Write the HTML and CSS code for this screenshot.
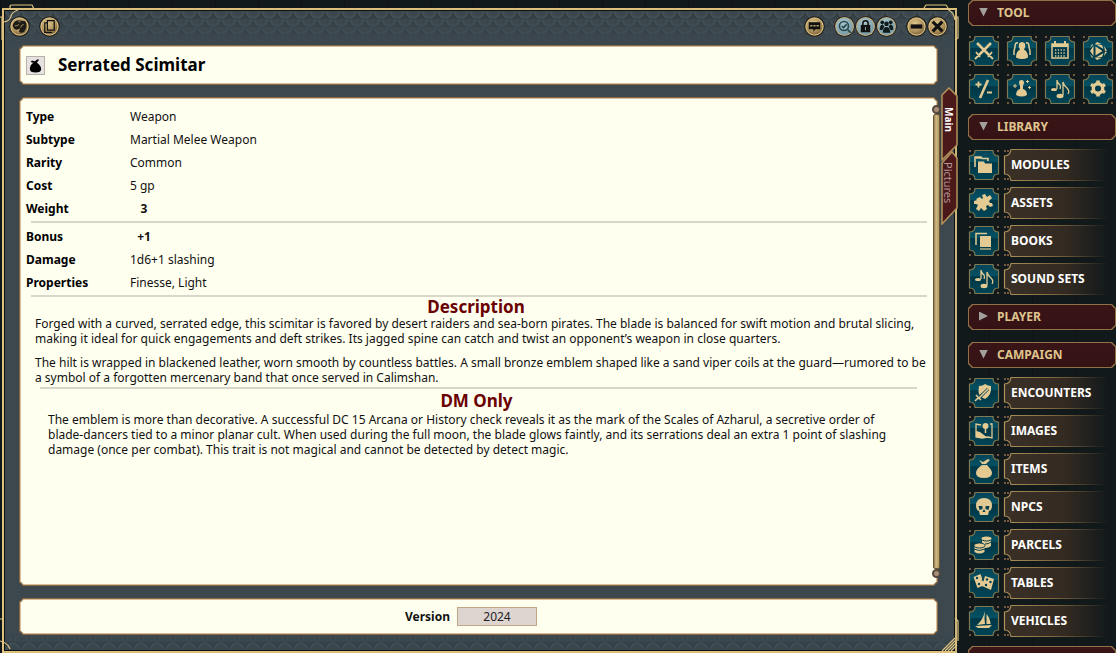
FILE: index.html
```html
<!DOCTYPE html>
<html lang="en">
<head>
  <meta charset="UTF-8" />
  <meta name="viewport" content="width=device-width, initial-scale=1.0" />
  <title>Serrated Scimitar</title>
  <link rel="stylesheet" href="styles.css">
</head>
<body>
  <!-- shared shapes -->
  <svg class="defs" aria-hidden="true">
    <defs>
      <linearGradient id="teal" x1="0" y1="0" x2="0" y2="1">
        <stop offset="0" stop-color="#064458" />
        <stop offset=".38" stop-color="#045062" />
        <stop offset=".42" stop-color="#003746" />
        <stop offset="1" stop-color="#004556" />
      </linearGradient>
      <linearGradient id="wood" x1="0" y1="0" x2="1" y2="0">
        <stop offset="0" stop-color="#3a3026" />
        <stop offset=".55" stop-color="#332a22" />
        <stop offset=".95" stop-color="#332a22" stop-opacity="0" />
      </linearGradient>
      <linearGradient id="edge" gradientUnits="userSpaceOnUse" x1="0" y1="0" x2="104" y2="0">
        <stop offset="0" stop-color="#b0935a" />
        <stop offset=".5" stop-color="#7c653e" />
        <stop offset="1" stop-color="#7c653e" stop-opacity="0" />
      </linearGradient>
      <radialGradient id="brass" cx=".4" cy=".3" r=".8">
        <stop offset="0" stop-color="#dcc48c" />
        <stop offset=".6" stop-color="#b0935c" />
        <stop offset="1" stop-color="#715a34" />
      </radialGradient>
      <radialGradient id="steel" cx=".4" cy=".3" r=".8">
        <stop offset="0" stop-color="#a9c6cc" />
        <stop offset="1" stop-color="#7197a2" />
      </radialGradient>
    </defs>
    <symbol id="tile" viewBox="0 0 32 32">
      <path d="M7 1.500H25Q25 7 30.500 7V25Q25 25 25 30.500H7Q7 25 1.500 25V7Q7 7 7 1.500Z" fill="url(#teal)" stroke="#7f7a52" stroke-width="1.200" />
      <path d="M1 1h2v2h-2zM29 1h2v2h-2zM1 29h2v2h-2zM29 29h2v2h-2z" fill="#765842" />
    </symbol>
    <symbol id="plate" viewBox="0 0 112 32">
      <path d="M8 .5H112V31.500H8Q7 25 1 25V7Q7 7 8 .5Z" fill="url(#wood)" />
      <path d="M104 .5H8Q7 7 1.500 7V25Q7 25 8 31.500H104" fill="none" stroke="url(#edge)" stroke-width="1.200" />
      <path d="M1 1h2v2h-2zM4 1h2v2h-2zM1 29h2v2h-2zM4 29h2v2h-2z" fill="#765842" />
    </symbol>
    <symbol id="coin" viewBox="0 0 20 20">
      <circle cx="10" cy="10" r="9.800" fill="#1c1a16" />
      <circle cx="10" cy="10" r="8.800" fill="#d6bc80" />
      <circle cx="10" cy="10" r="7.600" fill="url(#brass)" />
    </symbol>
    <symbol id="coin-blue" viewBox="0 0 20 20">
      <circle cx="10" cy="10" r="9.800" fill="#1c1a16" />
      <circle cx="10" cy="10" r="9" fill="#c6b181" />
      <circle cx="10" cy="10" r="8" fill="url(#steel)" />
    </symbol>
    <symbol id="notes" viewBox="0 0 32 32">
      <path d="M13 7v9M13 7q0 3 3 5q1 2 0 4M19 9v13M19 9q1 4 4 6q3 3 1 6" fill="none" stroke="#e2ca92" stroke-width="1.300" />
      <ellipse cx="10" cy="16.500" rx="3" ry="1.600" fill="#e2ca92" />
      <ellipse cx="16" cy="23" rx="3.500" ry="2.200" fill="#e2ca92" />
    </symbol>
    <symbol id="bag" viewBox="0 0 32 32">
      <path d="M11 9l4 1 4-3 2 1-3 4q6 4 6 9 0 5-8 5t-8-5q0-6 5-9l-4-1z" />
    </symbol>
  </svg>

  <div class="app">
    <main class="window">
      <svg class="corner corner-tl" aria-hidden="true" viewBox="0 0 40 40">
        <path d="M10 5V3Q10 1 12 1H32L34 5M0 13H2V36M4 18Q10 17 11 12Q12 8 18 6" />
      </svg>
      <svg class="corner corner-tr" aria-hidden="true" viewBox="0 0 40 40">
        <path d="M4 4L6 1H26L28 4M27 5Q34 8 35 16M35 13H38V34L35 36" />
      </svg>
      <svg class="corner corner-bl" aria-hidden="true" viewBox="0 0 40 40">
        <path d="M0 6H3M0 28Q8 30 10 36" />
      </svg>
      <svg class="corner corner-br" aria-hidden="true" viewBox="0 0 40 40">
        <path d="M35 5L38 8V28M22 38L35 25M25 38L36 27M28 38L37 29M31 38L37 32" />
      </svg>

      <header class="toolbar">
        <button class="round" aria-label="Token">
          <svg viewBox="0 0 20 20"><use href="#coin" /><path d="M3.500 9q1-5 6-5l6 1q2 3 1 6l-2 4q-3 2-5 0l1-3-3 1q-3 0-4-4z" fill="#1c1b16" /><path d="M5.500 9q2 1 4-1M11 11q1-3 3-3M9 5l2 1" stroke="#8d7850" fill="none" /></svg>
        </button>
        <button class="round copy" aria-label="Copy">
          <svg viewBox="0 0 20 20"><use href="#coin" /><path d="M8 4.500h6.500v9H8zM8 6.500H5.500v9h7" fill="none" stroke="#111" stroke-width="1.200" /></svg>
        </button>
        <span class="spacer"></span>
        <button class="round" aria-label="Chat">
          <svg viewBox="0 0 20 20"><use href="#coin" /><path d="M4.500 6h11v6.500H11L9 15v-2.500H4.500z" fill="#111" /><path d="M6 8.500h2v1.500h-2zM9 8.500h2v1.500h-2zM12 8.500h2v1.500h-2z" fill="#c2a871" /></svg>
        </button>
        <div class="round-group share">
          <button class="round" aria-label="Identify">
            <svg viewBox="0 0 20 20"><use href="#coin-blue" /><circle cx="9.500" cy="9.500" r="4.300" fill="none" stroke="#29464e" stroke-width="1.500" /><path d="M13 13l3 3M7.500 9.500l1.500 1.500 3-3" fill="none" stroke="#29464e" stroke-width="1.600" /></svg>
          </button>
          <button class="round" aria-label="Lock">
            <svg viewBox="0 0 20 20"><use href="#coin-blue" /><path d="M7.500 9V7q0-2.500 2.500-2.500T12.500 7v2" fill="none" stroke="#111" stroke-width="1.500" /><path d="M5.500 8.500h9v7h-9z" fill="#111" /><path d="M9.500 10.500h1v3h-1z" fill="#82a5ad" /></svg>
          </button>
          <button class="round" aria-label="Share">
            <svg viewBox="0 0 20 20"><use href="#coin-blue" /><g fill="#101b1e"><circle cx="6" cy="6" r="1.800" /><circle cx="14" cy="6" r="1.800" /><circle cx="10" cy="7.500" r="2.200" /><path d="M3.500 13q0-5 3-5l1.500 2-2 3.500zM16.500 13q0-5-3-5l-1.500 2 2 3.500zM6.500 16q0-5.500 3.500-5.500t3.500 5.500z" /></g></svg>
          </button>
        </div>
        <div class="round-group">
          <button class="round" aria-label="Minimize">
            <svg viewBox="0 0 20 20"><use href="#coin" /><path d="M4.500 8h11v4h-11z" fill="#111" /></svg>
          </button>
          <button class="round" aria-label="Close">
            <svg viewBox="0 0 20 20"><use href="#coin" /><path d="M6.500 6.500l7 7M13.500 6.500l-7 7" stroke="#111" stroke-width="3" stroke-linecap="square" /></svg>
          </button>
        </div>
      </header>

      <section class="panel title">
        <button class="link-icon" aria-label="Item link"><svg viewBox="4 4 24 24"><use href="#bag" width="32" height="32" /></svg></button>
        <h1>Serrated Scimitar</h1>
      </section>

      <section class="panel sheet">
        <dl class="fields">
          <dt>Type</dt><dd>Weapon</dd>
          <dt>Subtype</dt><dd>Martial Melee Weapon</dd>
          <dt>Rarity</dt><dd>Common</dd>
          <dt>Cost</dt><dd>5 gp</dd>
          <dt>Weight</dt><dd class="number">3</dd>
        </dl>
        <hr>
        <dl class="fields">
          <dt>Bonus</dt><dd class="number">+1</dd>
          <dt>Damage</dt><dd>1d6+1 slashing</dd>
          <dt>Properties</dt><dd>Finesse, Light</dd>
        </dl>
        <hr>
        <div class="story">
          <h2>Description</h2>
          <p>Forged with a curved, serrated edge, this scimitar is favored by desert raiders and sea-born pirates. The blade is balanced for swift motion and brutal slicing, making it ideal for quick engagements and deft strikes. Its jagged spine can catch and twist an opponent’s weapon in close quarters.</p>
          <p>The hilt is wrapped in blackened leather, worn smooth by countless battles. A small bronze emblem shaped like a sand viper coils at the guard—rumored to be a symbol of a forgotten mercenary band that once served in Calimshan.</p>
          <hr>
          <div class="secret">
            <h2>DM Only</h2>
            <p>The emblem is more than decorative. A successful DC 15 Arcana or History check reveals it as the mark of the Scales of Azharul, a secretive order of blade-dancers tied to a minor planar cult. When used during the full moon, the blade glows faintly, and its serrations deal an extra 1 point of slashing damage (once per combat). This trait is not magical and cannot be detected by detect magic.</p>
          </div>
        </div>
        <div class="scroll" aria-hidden="true"><i></i><b></b><i></i></div>
      </section>

      <section class="panel footer">
        <label for="version">Version</label>
        <input id="version" type="text" value="2024">
      </section>

      <nav class="tabs">
        <button class="tab active">
          <svg viewBox="0 0 17 74" aria-hidden="true"><path d="M1 8L8 1L16 9V58L1 73Z" /></svg><span>Main</span>
        </button>
        <button class="tab">
          <svg viewBox="0 0 17 74" aria-hidden="true"><path d="M1 12L11 1L16 7V57L1 73Z" /></svg><span>Pictures</span>
        </button>
      </nav>
    </main>

    <aside class="sidebar">
      <button class="group"><i class="down"></i>TOOL</button>
      <div class="tools">
        <button class="icon" aria-label="Combat tracker"><svg viewBox="0 0 32 32"><use href="#tile" /><path d="M9 8L21 20M23 8L11 20" stroke="#e2ca92" stroke-width="2.600" /><path d="M8 17l4 5M24 17l-4 5M10.500 20.500L7 24M21.500 20.500L25 24" stroke="#e2ca92" stroke-width="1.800" /></svg></button>
        <button class="icon" aria-label="Party sheet"><svg viewBox="0 0 32 32"><use href="#tile" /><path d="M13 8.500q3-3 6 0 1 3-1 6 4 2 4 8-6 3-12 0 0-6 4-8-2-3-1-6z" fill="#e2ca92" /><path d="M12 8q-3-1-3 4l-1 4v4M20 8q3-1 3 4l1 4v4" fill="none" stroke="#e2ca92" stroke-width="1.500" /></svg></button>
        <button class="icon" aria-label="Calendar"><svg viewBox="0 0 32 32"><use href="#tile" /><path d="M8 9h16v14H8z" fill="none" stroke="#e2ca92" stroke-width="1.500" /><path d="M8 9h16v3H8z" fill="#e2ca92" /><path d="M11 6v4M21 6v4" stroke="#e2ca92" stroke-width="2" /><path d="M11 15h11M11 18h11M11 21h11" stroke="#e2ca92" stroke-width="1.300" stroke-dasharray="1.300 1.500" /></svg></button>
        <button class="icon" aria-label="Dice"><svg viewBox="0 0 32 32"><use href="#tile" /><g fill="#e2ca92"><path d="M13.500 11.500l7 4.500-7 4.500z" /><path d="M11.500 11v10L8 16zM15 7l-2.500 2.500 7-.5zM14 9.500l6 .5 1.500 4zM14 22.500l6-.5 1.500-4zM15 25l-2.500-2.500 7 .5zM22 11l3 4.500-2 .5zM22 21l3-4-2-.5zM8 13l2-4 1 1zM8 19l2 4 1-1z" /></g></svg></button>
        <button class="icon" aria-label="Modifiers"><svg viewBox="0 0 32 32"><use href="#tile" /><path d="M20 7L12 25" stroke="#e2ca92" stroke-width="2.600" /><path d="M7.500 11.500h6M10.500 8.500v6M19 19.500h5" stroke="#e2ca92" stroke-width="1.800" /></svg></button>
        <button class="icon" aria-label="Effects"><svg viewBox="0 0 32 32"><use href="#tile" /><path d="M13 10q0-3 2.500-3t2.500 3l-1 3v3q4 1 4 6-5 3-11 0 0-5 4-6v-3z" fill="#e2ca92" /><path d="M9 11v4M7 13h4M21.500 7v3M20 8.500h3M23.500 13v3M22 14.500h3" stroke="#e2ca92" /></svg></button>
        <button class="icon" aria-label="Sounds"><svg viewBox="0 0 32 32"><use href="#tile" /><use href="#notes" /></svg></button>
        <button class="icon" aria-label="Options"><svg viewBox="0 0 32 32"><use href="#tile" /><circle cx="16" cy="15.500" r="4.700" fill="none" stroke="#e2ca92" stroke-width="3.400" /><path d="M16 7.500v3M16 20.500v3M9 11.500l2.500 1.500M20.500 18l2.500 1.500M9 19.500l2.500-1.500M20.500 13l2.500-1.500" stroke="#e2ca92" stroke-width="3.600" /></svg></button>
      </div>

      <button class="group"><i class="down"></i>LIBRARY</button>
      <button class="entry"><svg class="icon" viewBox="0 0 32 32"><use href="#tile" /><path d="M7 18V8h6l1 1.500h6V12M8 9h5" fill="none" stroke="#e2ca92" stroke-width="1.600" /><path d="M10 12.500h6l1 2h7V24H10z" fill="#e2ca92" /></svg><span><svg viewBox="0 0 112 32"><use href="#plate" /></svg>MODULES</span></button>
      <button class="entry"><svg class="icon" viewBox="0 0 32 32"><use href="#tile" /><path d="M8 12l4-2 2 2 1-1-1-3 3-1 2 3 3-2 2 3-3 3 1 2 2 0 1 3-3 1-2-2-2 1 1 3-3 2-3-3-2 3-3-2 2-4-2-1-2 0 0-3 3-1z" fill="#e2ca92" /></svg><span><svg viewBox="0 0 112 32"><use href="#plate" /></svg>ASSETS</span></button>
      <button class="entry"><svg class="icon" viewBox="0 0 32 32"><use href="#tile" /><path d="M8 20V8.500h11" fill="none" stroke="#e2ca92" stroke-width="1.500" /><path d="M12 11h11v11H12z" fill="#e2ca92" /><path d="M12 24h11" stroke="#e2ca92" stroke-width="1.200" /></svg><span><svg viewBox="0 0 112 32"><use href="#plate" /></svg>BOOKS</span></button>
      <button class="entry"><svg class="icon" viewBox="0 0 32 32"><use href="#tile" /><use href="#notes" /></svg><span><svg viewBox="0 0 112 32"><use href="#plate" /></svg>SOUND SETS</span></button>

      <button class="group"><i class="right"></i>PLAYER</button>
      <button class="group"><i class="down"></i>CAMPAIGN</button>
      <button class="entry"><svg class="icon" viewBox="0 0 32 32"><use href="#tile" /><path d="M11 9q4 0 6-2 3 2 6 2 1 9-6 13l-4-2 6-7-8 5q-1-4 0-9z" fill="#e2ca92" /><path d="M20 12L10 22M8 18l5 5M10 21l-3 3" stroke="#063f50" stroke-width="3" /><path d="M20 12L10 22M8 18l5 5M10 21l-3 3" stroke="#e2ca92" stroke-width="1.600" /></svg><span><svg viewBox="0 0 112 32"><use href="#plate" /></svg>ENCOUNTERS</span></button>
      <button class="entry"><svg class="icon" viewBox="0 0 32 32"><use href="#tile" /><path d="M13 10L8 9v13l6 1 6-1 4 1V9h-2" fill="none" stroke="#e2ca92" stroke-width="1.300" /><path d="M8 16l4 1 4 3 4 3-6 0-6-1z" fill="#e2ca92" /><circle cx="17.500" cy="11" r="3" fill="#e2ca92" /><path d="M17.500 13v5" stroke="#e2ca92" stroke-width="1.500" /></svg><span><svg viewBox="0 0 112 32"><use href="#plate" /></svg>IMAGES</span></button>
      <button class="entry"><svg class="icon" viewBox="0 0 32 32"><use href="#tile" /><path d="M11 7l4 2 5-3 2 1-4 4h-4zM14 12h5q5 5 5 8 0 5-8 5t-8-5q0-4 6-8z" fill="#e2ca92" /></svg><span><svg viewBox="0 0 112 32"><use href="#plate" /></svg>ITEMS</span></button>
      <button class="entry"><svg class="icon" viewBox="0 0 32 32"><use href="#tile" /><path d="M8 15q0-8 8-8t8 8q0 4-3 5l-1 4h-8l-1-4q-3-1-3-5z" fill="#e2ca92" /><path d="M10.500 15h4v3l-3 1zM21.500 15h-4v3l3 1zM16 18l1.500 3h-3z" fill="#063f50" /></svg><span><svg viewBox="0 0 112 32"><use href="#plate" /></svg>NPCS</span></button>
      <button class="entry"><svg class="icon" viewBox="0 0 32 32"><use href="#tile" /><g fill="#e2ca92"><path d="M6.500 17v6q5 3 10 0v-6z" /><path d="M14 10v8l3 1q4 0 6-2v-7z" /></g><g fill="#e2ca92" stroke="#063f50"><ellipse cx="18.500" cy="9.500" rx="5.500" ry="2.500" /><ellipse cx="11.500" cy="16.500" rx="5.500" ry="2.500" /></g><path d="M6 20q5 3 11 0M17 15q4 0 6-2" fill="none" stroke="#063f50" /></svg><span><svg viewBox="0 0 112 32"><use href="#plate" /></svg>PARCELS</span></button>
      <button class="entry"><svg class="icon" viewBox="0 0 32 32"><use href="#tile" /><path d="M5.500 10l7-3 4 11-7 3zM17 9l9 3-3 11-9-4z" fill="#e2ca92" /><g fill="#063f50"><circle cx="9" cy="11" r="1.200" /><circle cx="11" cy="17" r="1.200" /><circle cx="19" cy="12.500" r="1.200" /><circle cx="22.500" cy="15" r="1.200" /><circle cx="18" cy="18" r="1.200" /></g><path d="M16 9l-2 5" stroke="#063f50" /></svg><span><svg viewBox="0 0 112 32"><use href="#plate" /></svg>TABLES</span></button>
      <button class="entry"><svg class="icon" viewBox="0 0 32 32"><use href="#tile" /><path d="M17 6q-1 7 0 13l-8 1q6-5 8-14zM18.500 9q4 5 4 10h-4zM7 21l17-1-3 3H10z" fill="#e2ca92" /></svg><span><svg viewBox="0 0 112 32"><use href="#plate" /></svg>VEHICLES</span></button>
      <button class="group" aria-label="Rules"></button>
    </aside>
  </div>
</body>
</html>
```

FILE: styles.css
```css
* {
  box-sizing: border-box;
}
body {
  margin: 0;
  height: 100vh;
  overflow: hidden;
  background: #12191b;
  font-family: "Noto Sans", sans-serif;
  font-size: 12px;
  color: #111;
}
button {
  padding: 0;
  border: none;
  background: none;
  font: inherit;
  color: inherit;
  cursor: pointer;
}
svg {
  display: block;
}
.defs {
  position: absolute;
  width: 0;
  height: 0;
}
.app {
  display: flex;
  height: 100%;
  gap: 11px;
  padding-left: 2px;
  background: repeating-linear-gradient(90deg, rgba(0,0,0,0.2) 0 1px, transparent 1px 43px);
}

/* item window */
.window {
  position: relative;
  z-index: 0;
  flex: 1;
  display: flex;
  flex-direction: column;
  gap: 12px;
  margin-top: 8px;
  padding: 0 17px 16px 15px;
  border: 2px solid #dcc07c;
  border-right-color: #cdb67c;
  box-shadow: inset 0 0 0 1px #0d1315;
  background: #3c484e;
}
.window::before,
.window::after {
  content: "";
  position: absolute;
  z-index: -1;
  left: 1px;
  right: 1px;
  top: 1px;
  height: 34px;
  background:
    radial-gradient(circle at 50% 0, #3b474d 0 5px, #47545a 7px, #323d42 8px, transparent 9px) 0 0 / 16px 16px,
    radial-gradient(circle at 50% 0, #3b474d 0 5px, #47545a 7px, #323d42 8px, transparent 9px) 8px 8px / 16px 16px,
    #364147;
  mask-image: linear-gradient(#000 20%, transparent);
}
.window::after {
  top: auto;
  bottom: 1px;
  height: 16px;
  background:
    radial-gradient(circle at 50% 100%, #38454b 0 5px, #435057 7px, #313c42 8px, transparent 9px) 0 0 / 16px 16px,
    radial-gradient(circle at 50% 100%, #38454b 0 5px, #435057 7px, #313c42 8px, transparent 9px) 8px 8px / 16px 16px,
    #364147;
  mask-image: linear-gradient(transparent, #000 60%);
}
.corner {
  position: absolute;
  width: 40px;
  height: 40px;
  fill: none;
  stroke: #e0c582;
  stroke-width: 1.2;
}
.corner-tl { left: -4px; top: -6px; }
.corner-tr { right: -5px; top: -6px; }
.corner-bl { left: -4px; bottom: -2px; }
.corner-br { right: -5px; bottom: -2px; }

.toolbar {
  display: flex;
  align-items: center;
  height: 23px;
  margin: 5px -10px -5px;
}
.round,
.round svg {
  width: 21px;
  height: 21px;
}
.toolbar .copy {
  margin-left: 9px;
}
.spacer {
  flex: 1;
}
.round-group {
  display: flex;
}
.share {
  margin: 0 9px;
}

.panel {
  position: relative;
  z-index: 0;
}
.panel::before,
.panel::after {
  content: "";
  position: absolute;
  z-index: -1;
  inset: 0;
  background: #8c6841;
  clip-path: polygon(4px 0, calc(100% - 4px) 0, 100% 4px, 100% calc(100% - 4px), calc(100% - 4px) 100%, 4px 100%, 0 calc(100% - 4px), 0 4px);
}
.panel::after {
  inset: 1px;
  border: 1px solid #d5bea0;
  background: #fffff0;
}
.title {
  display: flex;
  align-items: center;
  gap: 13px;
  height: 40px;
  padding: 0 7px;
}
.title h1 {
  margin: 0;
  font-size: 17px;
  line-height: 24px;
  color: #000;
}
.link-icon {
  width: 19px;
  height: 19px;
  border: 1px solid #b9b0a8;
  background: #e6e2e2;
}
.link-icon svg {
  width: 17px;
  height: 17px;
}
.sheet {
  flex: 1;
  padding: 8px 11px 0 7px;
}
.fields {
  display: grid;
  grid-template-columns: 104px 1fr;
  margin: 0;
  line-height: 23px;
}
.fields dt {
  font-weight: bold;
  color: #000;
}
.fields dd {
  margin: 0;
}
.fields .number {
  width: 28px;
  font-weight: bold;
  text-align: center;
}
hr {
  height: 2px;
  margin: 1px 0 2px 5px;
  border: none;
  background: #d8d7cb;
}
.story {
  margin-top: -1px;
  padding: 0 10px 0 9px;
  line-height: 15px;
}
.story h2 {
  margin: 0;
  font-size: 17px;
  line-height: 18px;
  text-align: center;
  color: #6b0000;
}
.story p {
  margin: 0 -10px 9px 0;
}
.story hr {
  margin: -7px 0 3px 5px;
}
.secret {
  padding: 0 12px 0 13px;
}
.secret h2 {
  margin-bottom: 2px;
}
.secret p {
  margin-right: 0;
}
.scroll {
  position: absolute;
  right: -3px;
  top: 8px;
  bottom: 8px;
  display: flex;
  flex-direction: column;
  align-items: center;
}
.scroll i {
  width: 9px;
  height: 9px;
  border: 2px solid #51473f;
  border-radius: 50%;
  background: #a98e78;
}
.scroll b {
  flex: 1;
  width: 7px;
  border: 1px solid #6e5434;
  border-radius: 2px;
  background: linear-gradient(90deg, #8f7648, #d3bd88 40%, #b9a16a 80%);
}
.footer {
  display: flex;
  align-items: center;
  justify-content: center;
  gap: 7px;
  height: 37px;
  padding-right: 15px;
}
.footer label {
  font-weight: bold;
}
.footer input {
  width: 80px;
  height: 19px;
  padding: 0;
  border: 1px solid #c0a582;
  background: #ded5d1;
  font: inherit;
  text-align: center;
  color: #222;
}

.tabs {
  position: absolute;
  right: -3px;
  top: 77px;
}
.tab {
  position: relative;
  display: block;
  width: 17px;
  height: 74px;
  font-size: 11px;
  color: #b39694;
}
.tab + .tab {
  margin-top: -10px;
}
.tab.active {
  z-index: 1;
  font-size: 10px;
  font-weight: bold;
  color: #fff;
}
.tab svg {
  width: 17px;
  height: 74px;
  fill: #4c191b;
  stroke: #b5925a;
  stroke-width: 1.5;
}
.tab span {
  position: absolute;
  inset: 0 3px 10px 0;
  writing-mode: vertical-rl;
  line-height: 13px;
  text-align: center;
}

/* sidebar */
.sidebar {
  flex: 0 0 148px;
  display: flex;
  flex-direction: column;
  gap: 6px;
  color: #fff;
  font-weight: bold;
}
.group {
  position: relative;
  z-index: 0;
  flex: none;
  display: flex;
  align-items: center;
  gap: 9px;
  height: 26px;
  margin-bottom: 6px;
  padding: 0 0 2px 11px;
  color: #dfc48d;
  background: #927146;
  clip-path: polygon(4px 0, calc(100% - 4px) 0, 100% 4px, 100% calc(100% - 4px), calc(100% - 4px) 100%, 4px 100%, 0 calc(100% - 4px), 0 4px);
}
.group::before {
  content: "";
  position: absolute;
  z-index: -1;
  inset: 1px;
  background: linear-gradient(#3a1517, #341214);
  clip-path: polygon(4px 0, calc(100% - 4px) 0, 100% 4px, 100% calc(100% - 4px), calc(100% - 4px) 100%, 4px 100%, 0 calc(100% - 4px), 0 4px);
}
.entry + .group {
  margin-top: 3px;
}
.group i {
  width: 9px;
  height: 9px;
  background: #a3a19e;
}
.down {
  clip-path: polygon(0 0, 100% 0, 50% 100%);
}
.right {
  clip-path: polygon(0 0, 100% 50%, 0 100%);
}
.tools {
  display: grid;
  grid-template-columns: repeat(4, 32px);
  gap: 6px;
  margin: -3px 0 3px;
}
.icon,
.icon svg {
  width: 32px;
  height: 32px;
}
.entry {
  display: flex;
  gap: 3px;
  flex: none;
  height: 32px;
}
.group + .entry {
  margin-top: -3px;
}
.entry span {
  position: relative;
  z-index: 0;
  flex: 1;
  padding-left: 8px;
  line-height: 31px;
  text-align: left;
}
.entry span svg {
  position: absolute;
  z-index: -1;
  left: 0;
  top: 0;
  width: 112px;
  height: 32px;
}
```
